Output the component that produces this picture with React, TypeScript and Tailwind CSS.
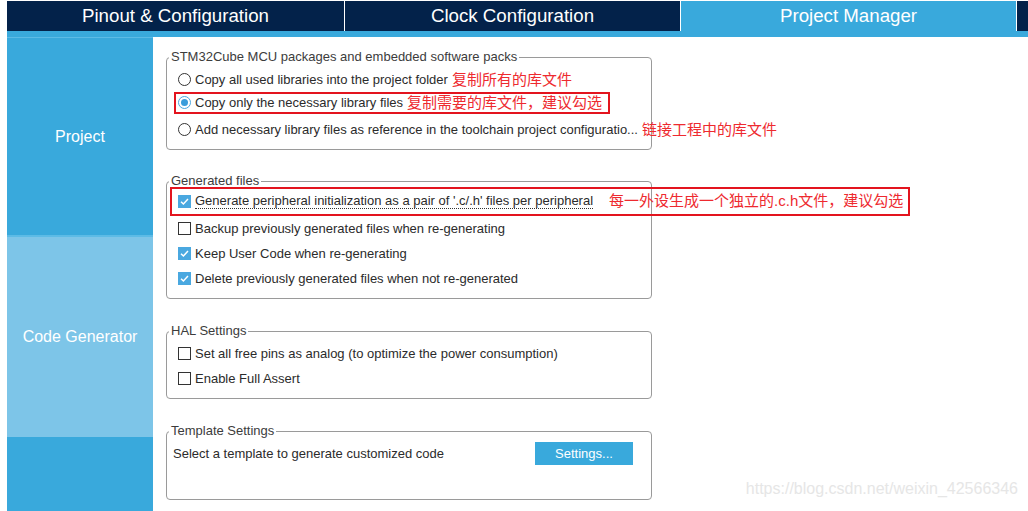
import type { ReactNode } from 'react'

const font = "font-['Liberation_Sans',Arial,sans-serif]"
const cjk = "font-['Liberation_Sans','Noto_Sans_CJK_SC',sans-serif]"

function Checkbox({ checked }: { checked?: boolean }) {
  if (checked) {
    return (
      <span className="flex h-[13px] w-[13px] shrink-0 items-center justify-center bg-[#4aa8e0]">
        <svg viewBox="0 0 12 12" className="h-[11px] w-[11px]" fill="none">
          <path d="M2.2 6.2l2.6 2.6 5-5.4" stroke="white" strokeWidth={1.6} />
        </svg>
      </span>
    )
  }
  return <span className="h-[13px] w-[13px] shrink-0 border border-[#333] bg-white" />
}

function Radio({ checked }: { checked?: boolean }) {
  return (
    <span
      className={`flex h-[13px] w-[13px] shrink-0 items-center justify-center rounded-full border bg-white ${
        checked ? 'border-[#4aa8e0]' : 'border-[#333]'
      }`}
    >
      {checked && <span className="h-[7px] w-[7px] rounded-full bg-[#3a9ddb]" />}
    </span>
  )
}

function Note({ children }: { children: ReactNode }) {
  return <span className={`${cjk} whitespace-nowrap text-[15px] leading-none text-[#ee2a2f]`}>{children}</span>
}

function Group({
  title,
  children,
  className = '',
}: {
  title: string
  children: ReactNode
  className?: string
}) {
  return (
    <fieldset className={`w-[486px] min-w-0 rounded-[4px] border border-[#9a9a9a] pt-[2px] pb-[7px] ${className}`}>
      <legend className="ml-[2px] px-[2px] text-[13px] leading-4 text-[#3c3c3c]">{title}</legend>
      {children}
    </fieldset>
  )
}

function Row({ children }: { children: ReactNode }) {
  return (
    <div className="flex h-[25px] items-center gap-[4px] whitespace-nowrap pl-[11px] text-[13px] text-[#2b2b2b]">
      {children}
    </div>
  )
}

export default function App() {
  return (
    <div className={`${font} h-[511px] w-[1028px] overflow-hidden bg-white pl-[7px] pt-px`}>
      <div className="flex h-[30px] bg-[#03224a] text-[18.7px] text-white">
        <div className="flex w-[338px] items-center justify-center border-r border-white">Pinout &amp; Configuration</div>
        <div className="flex w-[336px] items-center justify-center border-r border-white">Clock Configuration</div>
        <div className="flex w-[336px] items-center justify-center border-r border-white bg-[#39a9dc]">Project Manager</div>
        <div className="flex-1" />
      </div>
      <div className="h-[6px] bg-[#39a9dc]" />

      <div className="flex h-[474px]">
        <div className="flex w-[146px] flex-col bg-[#39a9dc] text-[16px] text-white">
          <div className="flex h-[198px] items-center justify-center border-t border-[#5cbbe6]">Project</div>
          <div className="h-[2px] bg-[#5cbbe6]" />
          <div className="flex h-[200px] items-center justify-center bg-[#7dc5e8]">Code Generator</div>
        </div>

        <div className="relative flex-1 pl-[13px] pt-[12px]">
          <Group title="STM32Cube MCU packages and embedded software packs">
            <Row>
              <Radio />
              <span>Copy all used libraries into the project folder</span>
              <Note>复制所有的库文件</Note>
            </Row>
            <Row>
              <div className="-ml-[4px] -mt-[4px] flex h-[22px] w-[436px] shrink-0 items-center gap-[4px] border-2 border-[#e3141e] pl-[2px]">
                <Radio checked />
                <span>Copy only the necessary library files</span>
                <Note>复制需要的库文件，建议勾选</Note>
              </div>
            </Row>
            <Row>
              <Radio />
              <span>Add necessary library files as reference in the toolchain project configuratio...</span>
              <Note>链接工程中的库文件</Note>
            </Row>
          </Group>

          <Group title="Generated files" className="mt-[23px]">
            <Row>
              <div className="-ml-[8px] -mt-[4px] flex h-[29px] w-[740px] shrink-0 items-center border-2 border-[#e3141e] pl-[6px]">
                <Checkbox checked />
                <span className="ml-[4px] border-b border-dotted border-[#333] leading-[14px]">
                  Generate peripheral initialization as a pair of '.c/.h' files per peripheral
                </span>
                <span className="ml-[16px]">
                  <Note>每一外设生成一个独立的.c.h文件，建议勾选</Note>
                </span>
              </div>
            </Row>
            <Row>
              <Checkbox />
              <span>Backup previously generated files when re-generating</span>
            </Row>
            <Row>
              <Checkbox checked />
              <span>Keep User Code when re-generating</span>
            </Row>
            <Row>
              <Checkbox checked />
              <span>Delete previously generated files when not re-generated</span>
            </Row>
          </Group>

          <Group title="HAL Settings" className="mt-[24px]">
            <Row>
              <Checkbox />
              <span>Set all free pins as analog (to optimize the power consumption)</span>
            </Row>
            <Row>
              <Checkbox />
              <span>Enable Full Assert</span>
            </Row>
          </Group>

          <Group title="Template Settings" className="mt-[24px] !pb-[33px]">
            <div className="flex h-[25px] items-center justify-between pl-[6px] pr-[18px] text-[13px] text-[#2b2b2b]">
              <span>Select a template to generate customized code</span>
              <button type="button" className="flex h-[23px] w-[98px] items-center justify-center bg-[#39a9dc] text-[13px] text-white">
                Settings...
              </button>
            </div>
          </Group>

          <div className="absolute bottom-[10px] right-[10px] text-[16px] text-[#e6e6e6]">https://blog.csdn.net/weixin_42566346</div>
        </div>
      </div>
    </div>
  )
}
